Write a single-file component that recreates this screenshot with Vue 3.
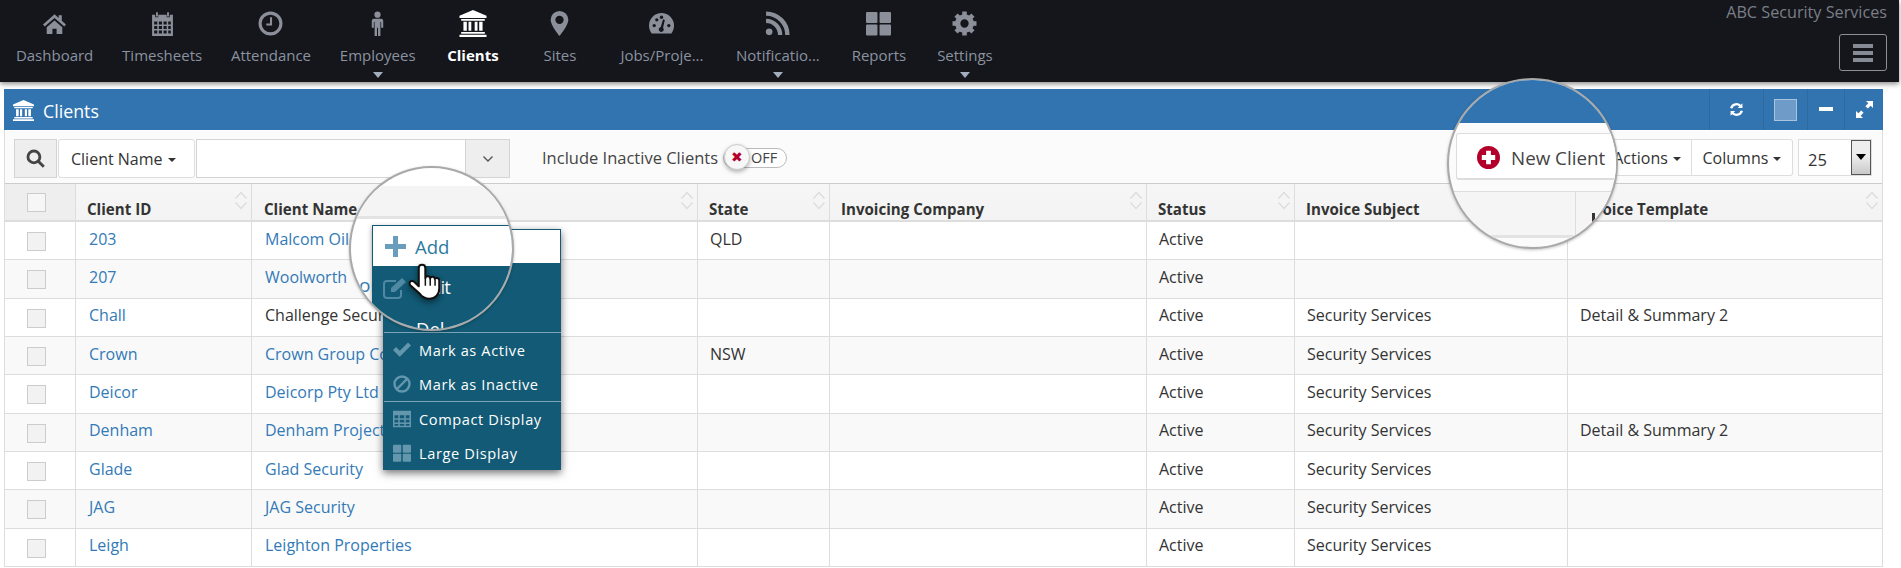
<script setup>
const navItems = [
  { icon: 'home', label: 'Dashboard', min: 86 },
  { icon: 'cal', label: 'Timesheets', min: 86 },
  { icon: 'clock', label: 'Attendance', min: 86 },
  { icon: 'male', label: 'Employees', caret: true, min: 86 },
  { icon: 'bank', label: 'Clients', active: true, min: 86 },
  { icon: 'marker', label: 'Sites', min: 88 },
  { icon: 'gauge', label: 'Jobs/Proje...', min: 116 },
  { icon: 'rss', label: 'Notificatio...', caret: true, min: 116 },
  { icon: 'tiles', label: 'Reports', min: 86 },
  { icon: 'cog', label: 'Settings', caret: true, min: 86 }
]
const heads = [
  { t: 'Client ID' }, { t: 'Client Name' }, { t: 'State' }, { t: 'Invoicing Company' },
  { t: 'Status' }, { t: 'Invoice Subject' }, { t: 'Invoice Template' }
]
const S = 'Security Services'
const D = 'Detail & Summary 2'
const rows = [
  ['203', 'Malcom Oil', 'QLD', '', '', ''],
  ['207', 'Woolworth', '', '', '', ''],
  ['Chall', 'Challenge Security', '', '', S, D, true],
  ['Crown', 'Crown Group Corporation', 'NSW', '', S, ''],
  ['Deicor', 'Deicorp Pty Ltd', '', '', S, ''],
  ['Denham', 'Denham Projects', '', '', S, D],
  ['Glade', 'Glad Security', '', '', S, ''],
  ['JAG', 'JAG Security', '', '', S, ''],
  ['Leigh', 'Leighton Properties', '', '', S, '']
]
const menuItems = [
  { icon: 'check', label: 'Mark as Active' },
  { icon: 'ban', label: 'Mark as Inactive', sep: true },
  { icon: 'table', label: 'Compact Display' },
  { icon: 'tiles', label: 'Large Display' }
]
const teeth = [0, 45, 90, 135, 180, 225, 270, 315]
</script>

<template>
  <div class="page">
    <svg class="sprite" width="0" height="0">
      <symbol id="home" viewBox="0 0 24 24"><path d="M12 3 1 13l1.6 1.8L12 6.6l9.4 8.2L23 13l-4-3.6V4h-3v2.8z"/><path d="M4.5 15.5 12 9l7.5 6.5V22H14v-5h-4v5H4.500z"/></symbol>
      <symbol id="cal" viewBox="0 0 24 24"><path fill-rule="evenodd" d="M2 3.500h3V6h3V3.500h8V6h3V3.500h3V24H2zM4 10v3h3v-3zm4.500 0v3h3v-3zm4.500 0v3h3v-3zm4.500 0v3H20v-3zM4 14.300v3h3v-3zm4.500 0v3h3v-3zm4.500 0v3h3v-3zm4.500 0v3H20v-3zM4 18.600v3h3v-3zm4.500 0v3h3v-3zm4.500 0v3h3v-3zm4.500 0v3H20v-3z"/><rect x="5.800" y="1" width="1.800" height="4.500" rx=".9"/><rect x="16.400" y="1" width="1.800" height="4.500" rx=".9"/></symbol>
      <symbol id="clock" viewBox="0 0 24 24"><circle cx="12" cy="12" r="10" fill="none" stroke="currentColor" stroke-width="3"/><path d="M13.500 6v8H8v-2h3.500V6z"/></symbol>
      <symbol id="male" viewBox="0 0 24 24"><circle cx="12" cy="3.500" r="3"/><path d="M8.500 7.500h7a2 2 0 0 1 2 2V16h-2v-5.500h-.7V24h-2.300v-8h-1v8H9.200V10.500h-.7V16h-2V9.500a2 2 0 0 1 2-2z"/></symbol>
      <symbol id="bank" viewBox="0 0 24 24"><path d="M12 0 24 5v2H0V5z"/><path d="M1.500 8h21v1.500h-21zM3.500 10.500h3v8h-3zM8 10.500h2.500v8H8zM13.500 10.500H16v8h-2.500zM17.500 10.500h3v8h-3zM1.500 19.500h21V21h-21zM0 22h24v2H0z"/></symbol>
      <symbol id="marker" viewBox="0 0 24 24"><path fill-rule="evenodd" d="M12 0a8.500 8.500 0 0 0-8.500 8.500C3.500 14 12 24 12 24s8.500-10 8.500-15.500A8.500 8.500 0 0 0 12 0zm0 4.500a4 4 0 1 1 0 8 4 4 0 0 1 0-8z"/></symbol>
      <symbol id="gauge" viewBox="0 0 24 24"><path d="M12 2A12 12 0 0 0 0 14c0 3 1 5.500 2.500 7.500h19C23 19.500 24 17 24 14A12 12 0 0 0 12 2z"/><g fill="#14161b"><circle cx="5" cy="14" r="1.600"/><circle cx="7.500" cy="8.500" r="1.600"/><circle cx="12" cy="6" r="1.600"/><circle cx="19" cy="14" r="1.600"/><path d="M13.500 8 15.200 8.600 13.500 16a2.400 2.400 0 1 1-2.200-.7z"/></g></symbol>
      <symbol id="rss" viewBox="0 0 24 24"><circle cx="4" cy="20" r="3.200"/><path d="M1 9.500A13.500 13.500 0 0 1 14.500 23M1 2.500A20.500 20.500 0 0 1 21.500 23" fill="none" stroke="currentColor" stroke-width="4.200"/></symbol>
      <symbol id="tiles" viewBox="0 0 24 24"><rect x="0" y="1" width="11" height="10.500" rx="1"/><rect x="13" y="1" width="11" height="10.500" rx="1"/><rect x="0" y="13" width="11" height="10.500" rx="1"/><rect x="13" y="13" width="11" height="10.500" rx="1"/></symbol>
      <symbol id="cog" viewBox="0 0 24 24"><circle cx="12" cy="12" r="6.500" fill="none" stroke="currentColor" stroke-width="5"/><rect v-for="a in teeth" :key="a" x="9.800" y="0.500" width="4.400" height="5" :transform="`rotate(${a} 12 12)`"/></symbol>
      <symbol id="check" viewBox="0 0 24 24"><path d="M9 21 0 12l4-4 5 5L20 2l4 4z"/></symbol>
      <symbol id="ban" viewBox="0 0 24 24"><circle cx="12" cy="12" r="10" fill="none" stroke="currentColor" stroke-width="3.200"/><path d="m5 19 14-14" stroke="currentColor" stroke-width="3.200"/></symbol>
      <symbol id="table" viewBox="0 0 24 24"><path fill-rule="evenodd" d="M0 1h24v22H0zM2 7v4h5V7zm7 0v4h6V7zm8 0v4h5V7zM2 13v3.500h5V13zm7 0v3.500h6V13zm8 0v3.500h5V13zM2 18.500V21h5v-2.500zm7 0V21h6v-2.500zm8 0V21h5v-2.500z"/></symbol>
    </svg>

    <header class="nav">
      <a v-for="n in navItems" :key="n.label" class="nav-item" :class="{ active: n.active }" :style="{ minWidth: n.min + 'px' }">
        <svg class="nav-icon"><use :href="'#' + n.icon"/></svg>
        <span class="nav-label">{{ n.label }}</span>
        <i v-if="n.caret" class="nav-caret"></i>
      </a>
      <div class="nav-right">
        <div class="company">ABC Security Services</div>
        <button class="burger"><i></i><i></i><i></i></button>
      </div>
    </header>

    <section class="panel">
      <div class="panel-head">
        <svg class="head-icon"><use href="#bank"/></svg>
        <span class="panel-title">Clients</span>
        <div class="tools">
          <span class="tool refresh">
            <svg width="15" height="15" viewBox="0 0 24 24" fill="none" stroke="#fff" stroke-width="3.800"><path d="M3.500 10A8.800 8.800 0 0 1 19 7"/><path d="M20.500 14A8.800 8.800 0 0 1 5 17"/><path d="M21.500 2v7.500H14z" fill="#fff" stroke="none"/><path d="M2.500 22v-7.500H10z" fill="#fff" stroke="none"/></svg>
          </span>
          <span class="tool swatch-cell"><i class="swatch"></i></span>
          <span class="tool min-cell"><i class="minus"></i></span>
          <span class="tool expand">
            <svg width="17" height="17" viewBox="0 0 17 17" fill="none"><path d="M10 0h7v7l-2.300-2.300-2.900 2.900-2.400-2.400 2.900-2.900zM7 17H0v-7l2.300 2.300 2.900-2.900 2.400 2.400-2.900 2.900z" fill="#fff"/></svg>
          </span>
        </div>
      </div>

      <div class="toolbar">
        <span class="addon search">
          <svg width="19" height="19" viewBox="0 0 24 24" fill="none" stroke="#444" stroke-width="3.600"><circle cx="10" cy="10" r="7.500"/><path d="m15.500 15.500 7 7"/></svg>
        </span>
        <button class="btn field-btn">Client Name <i class="caret"></i></button>
        <input class="field" type="text" />
        <span class="addon chevron">
          <svg width="12" height="8" viewBox="0 0 12 8" fill="none" stroke="#555" stroke-width="1.400"><path d="m1.500 1.500 4.500 4.500 4.500-4.500"/></svg>
        </span>
        <span class="inc-label">Include Inactive Clients</span>
        <span class="toggle"><span class="knob">✖</span><span class="off">OFF</span></span>
        <div class="tb-right">
          <div class="btn-group">
            <button class="btn">Actions <i class="caret"></i></button>
            <button class="btn">Columns <i class="caret"></i></button>
          </div>
          <div class="select"><span>25</span><i class="sel-arrow"></i></div>
        </div>
      </div>

      <div class="table">
        <div class="row head">
          <div class="cell cb-cell first"><i class="cb"></i></div>
          <div v-for="h in heads" :key="h.t" class="cell th">
            {{ h.t }}
            <svg class="sort" width="14" height="19" viewBox="0 0 14 19" fill="none" stroke="#dcdcdc" stroke-width="1.300"><path d="m1.500 7.500 5.500-6 5.500 6M1.500 11.500l5.500 6 5.500-6"/></svg>
          </div>
        </div>
        <div v-for="(r, i) in rows" :key="r[0]" class="row" :class="{ odd: i % 2 === 1 }">
          <div class="cell cb-cell"><i class="cb"></i></div>
          <div class="cell pad"><a>{{ r[0] }}</a></div>
          <div class="cell pad"><span v-if="r[6]">{{ r[1] }}</span><a v-else>{{ r[1] }}</a></div>
          <div class="cell">{{ r[2] }}</div>
          <div class="cell">{{ r[3] }}</div>
          <div class="cell">Active</div>
          <div class="cell">{{ r[4] }}</div>
          <div class="cell">{{ r[5] }}</div>
        </div>
      </div>
    </section>

    <!-- context menu floating over the table -->
    <div class="menu">
      <div class="menu-top"></div>
      <div class="menu-gap"></div>
      <div v-for="m in menuItems" :key="m.label" class="menu-item" :class="{ sep: m.sep }">
        <svg class="menu-icon"><use :href="'#' + m.icon"/></svg>
        <span>{{ m.label }}</span>
      </div>
    </div>

    <!-- magnifier over the menu -->
    <div class="lens lens-menu">
      <i class="lm-head"></i>
      <a class="lm-or">or</a>
      <div class="lm-menu">
        <div class="lm-add">
          <svg width="21" height="21" viewBox="0 0 21 21" fill="#6a9dbb"><path d="M8 0h5v8h8v5h-8v8H8v-8H0V8h8z"/></svg>
          <span>Add</span>
        </div>
        <div class="lm-dark">
          <svg class="lm-edit" width="26" height="22" viewBox="0 0 26 22" fill="none" stroke="#4f89a3" stroke-width="2"><path d="M18 13v5a3 3 0 0 1-3 3H4a3 3 0 0 1-3-3V7a3 3 0 0 1 3-3h9"/><path d="M8 15V11L19 1l4 4L12 15z" fill="#4f89a3" stroke="none"/></svg>
          <span class="lm-edit-t">Edit</span>
          <span class="lm-del">Del</span>
        </div>
      </div>
    </div>

    <!-- hand cursor -->
    <svg class="hand" width="41" height="41" viewBox="0 0 38 38">
      <path d="M14 2.500c2 0 3 1.300 3 3V15c0-1 1-1.800 2.300-1.800s2.200.8 2.200 2c.2-1 1.200-1.600 2.300-1.500 1.200.1 2 .9 2 2.100.4-.8 1.300-1.100 2.200-1 1.200.2 1.900 1.100 1.900 2.400v7.300c0 5.500-3.500 9.500-9 9.500-4.500 0-6.800-1.500-9-4.500L3 21.500c-1-1.300-.8-2.800.3-3.500 1.200-.8 2.600-.4 3.600.6l4 3.900V5.500c0-1.700 1-3 3.100-3z" fill="#fff" stroke="#111" stroke-width="1.900" stroke-linejoin="round"/>
      <path d="M17 15.500V22M21.500 15.500V22M26 16.500V22" stroke="#111" stroke-width="1.400" fill="none"/>
    </svg>

    <!-- magnifier over the New Client button -->
    <div class="lens lens-new">
      <i class="ln-blue"></i>
      <div class="ln-btn">
        <svg width="23" height="23" viewBox="0 0 24 24"><circle cx="12" cy="12" r="12" fill="#b3002a"/><path d="M9.500 5h5v4.500H19v5h-4.500V19h-5v-4.500H5v-5h4.500z" fill="#fff"/></svg>
        <span>New Client</span>
      </div>
      <div class="ln-head"><i class="ln-div"></i></div>
      <i class="ln-sliver"></i>
    </div>
  </div>
</template>

<style>
html, body { margin: 0; background: #fff; }
</style>

<style scoped>
.page {
  position: relative;
  width: 1901px;
  height: 568px;
  overflow: hidden;
  font-family: "Open Sans", "Liberation Sans", sans-serif;
  font-size: 16px;
  color: #333;
  background: #fff;
}
.sprite { position: absolute; }
i { display: block; font-style: normal; }

.nav {
  width: 1899px;
  height: 82px;
  background: #14161b;
  box-shadow: 0 2px 5px rgba(0, 0, 0, .45);
  display: flex;
  padding-left: 1.500px;
  box-sizing: border-box;
  position: relative;
}
.nav-item {
  display: flex;
  flex-direction: column;
  align-items: center;
  padding: 11px 14.400px 0;
  color: #8b92a0;
  box-sizing: border-box;
}
.nav-item.active { color: #fff; font-weight: 700; }
.nav-icon { width: 25px; height: 25px; fill: currentColor; color: #8b8f99; }
.active .nav-icon { color: #fff; width: 28px; height: 27px; margin-top: -1px; margin-bottom: -1px; }
.nav-label { font-size: 15px; line-height: 20px; margin-top: 9px; white-space: nowrap; }
.nav-caret {
  width: 0; height: 0; margin-top: 7px;
  border-left: 5px solid transparent;
  border-right: 5px solid transparent;
  border-top: 6px solid #a2adbd;
}
.nav-right {
  margin-left: auto;
  padding-right: 12px;
  display: flex;
  flex-direction: column;
  align-items: flex-end;
}
.company { font-size: 16.200px; line-height: 24px; color: #7b7e87; white-space: nowrap; }
.burger {
  margin-top: 10px;
  width: 48px; height: 37px;
  background: transparent;
  border: 1px solid #8d8f94;
  border-radius: 3px;
  padding: 0;
  display: flex;
  flex-direction: column;
  align-items: center;
  justify-content: center;
  gap: 3px;
}
.burger i { width: 20px; height: 4px; background: #868a94; }

.panel {
  margin: 7px 0 0 4px;
  width: 1879px;
  border-left: 1px solid #ddd;
  border-right: 1px solid #ddd;
  box-sizing: border-box;
}
.panel-head {
  height: 41px;
  margin: 0 -1px;
  background: #3174b0;
  display: flex;
  align-items: center;
  color: #fff;
  padding-left: 9px;
}
.head-icon { width: 21px; height: 21px; fill: #fff; margin-top: 2px; }
.panel-title { font-size: 17.800px; margin: 3px 0 0 9px; }
.tools { margin-left: auto; display: flex; height: 100%; }
.tool {
  display: flex;
  align-items: center;
  justify-content: center;
  border-left: 1px solid #2c6a9f;
  box-sizing: border-box;
}
.refresh { width: 54px; }
.swatch-cell { width: 44px; }
.min-cell { width: 37px; }
.expand { width: 39px; }
.swatch { width: 23px; height: 22px; background: #6f9bc9; border: 1px solid #a9c4df; box-sizing: border-box; }
.minus { width: 14px; height: 4px; background: #fff; margin-bottom: 2px; }

.toolbar {
  height: 54px;
  background: #fbfbfb;
  border-top: 1px solid #fff;
  border-bottom: 1px solid #ccc;
  box-sizing: border-box;
  display: flex;
  align-items: flex-start;
  padding: 8px 10px 0 9px;
}
.addon {
  height: 39px;
  background: #eee;
  border: 1px solid #d4d4d4;
  box-sizing: border-box;
  display: flex;
  align-items: center;
  justify-content: center;
}
.search { width: 43px; }
.chevron { width: 44px; border-left: 0; }
.btn {
  font: inherit;
  font-size: 16px;
  color: #333;
  height: 39px;
  background: #fff;
  border: 1px solid #ddd;
  padding: 0 12px;
  white-space: nowrap;
}
.field-btn { width: 137px; margin-left: 1px; border-radius: 3px; padding: 0 0 0 12px; text-align: left; }
.field {
  width: 270px;
  height: 39px;
  margin-left: 1px;
  border: 1px solid #d4d4d4;
  background: #fff;
  box-sizing: border-box;
  padding: 0;
}
.caret {
  display: inline-block;
  width: 0; height: 0;
  margin-left: 1px;
  vertical-align: middle;
  border-left: 4.500px solid transparent;
  border-right: 4.500px solid transparent;
  border-top: 4.500px solid #333;
}
.inc-label { margin-left: 32px; font-size: 16.500px; line-height: 38px; white-space: nowrap; color: #444; }
.toggle {
  position: relative;
  margin: 9px 0 0 5px;
  width: 64px;
  height: 20px;
  border: 1px solid #bbb;
  border-radius: 11px;
  background: #fff;
  box-sizing: border-box;
}
.knob {
  position: absolute;
  left: 0; top: -5px;
  width: 26px; height: 26px;
  border-radius: 50%;
  background: #f7f7f7;
  border: 1px solid #ccc;
  box-sizing: border-box;
  box-shadow: 0 2px 4px rgba(0, 0, 0, .3);
  color: #b3002a;
  font-size: 14px;
  line-height: 24px;
  text-align: center;
}
.off { position: absolute; left: 27px; top: -1px; font-size: 14.500px; line-height: 19px; color: #444; }
.tb-right { margin-left: auto; display: flex; }
.btn-group { display: flex; }
.btn-group .btn { height: 37px; }
.btn-group .btn:first-child { width: 140px; border-radius: 3px 0 0 3px; text-align: right; padding-right: 10px; }
.btn-group .btn:last-child { width: 101px; border-left: 0; border-radius: 0 3px 3px 0; padding: 0; }
.select {
  position: relative;
  margin-left: 5px;
  width: 74px;
  height: 37px;
  background: #fff;
  border: 1px solid #ddd;
  box-sizing: border-box;
  line-height: 40px;
  padding-left: 9px;
  font-size: 16.500px;
}
.sel-arrow {
  position: absolute;
  right: 0; top: 0;
  width: 20px; height: 35px;
  background: linear-gradient(#eee, #eee 45%, #c9c9c9);
  border: 1px solid #555;
  box-sizing: border-box;
}
.sel-arrow::after {
  content: "";
  position: absolute;
  left: 4px; top: 13px;
  border-left: 5px solid transparent;
  border-right: 5px solid transparent;
  border-top: 6px solid #000;
}

.row {
  display: grid;
  grid-template-columns: 70px 176px 446px 132px 317px 148px 273px 315px;
  height: 38.35px;
  box-sizing: border-box;
  border-bottom: 1px solid #ddd;
  background: #fff;
}
.row.odd { background: #f9f9f9; }
.row.head {
  height: 38px;
  background: linear-gradient(#f6f6f6, #f3f3f3);
  border-bottom: 2px solid #ddd;
}
.cell {
  border-left: 1px solid #ddd;
  padding: 6.500px 10px 0 12px;
  line-height: 21px;
  white-space: nowrap;
  overflow: hidden;
  position: relative;
}
.cell.pad { padding-left: 13px; }
.cell:first-child { border-left: 0; }
.th { font-weight: 700; font-size: 15.100px; padding: 14.500px 10px 0 11px; }
.th:nth-child(3) { padding-left: 12px; }
.first { background: #eee; }
.cb-cell { padding: 10px 0 0 22px; }
.first.cb-cell { padding-top: 9px; }
.cb {
  width: 19px; height: 19px;
  background: #f2f2f2;
  border: 1px solid #ccc;
  box-sizing: border-box;
}
.first .cb { background: #f6f6f6; }
.sort { position: absolute; right: 3px; top: 7px; }
a { color: #337ab7; text-decoration: none; }

/* context menu */
.menu {
  position: absolute;
  left: 383px; top: 229px;
  width: 178px;
  height: 241px;
  background: #125a75;
  box-shadow: 0 3px 8px rgba(0, 0, 0, .55);
  color: #fff;
  box-sizing: border-box;
}
.menu-top { height: 35px; background: #fff; border: 1px solid #125a75; border-left: 0; box-sizing: border-box; }
.menu-gap { height: 68px; border-bottom: 1px solid #7ca3b5; margin-left: 1px; }
.menu-item {
  height: 34px;
  display: flex;
  align-items: center;
  padding-left: 10px;
  font-size: 14.600px;
  letter-spacing: .6px;
}
.menu-item.sep { border-bottom: 1px solid #7ca3b5; margin-left: 1px; padding-left: 9px; }
.menu-icon { width: 18px; height: 18px; fill: #6496ad; color: #6496ad; margin-right: 8px; flex: none; }

/* lens */
.lens {
  position: absolute;
  border-radius: 50%;
  border: 2px solid #a9a9a9;
  box-sizing: border-box;
  overflow: hidden;
  background: #fff;
  box-shadow: 0 1px 3px rgba(0, 0, 0, .25);
}
.lens-menu { left: 349px; top: 166px; width: 165px; height: 165px; }
.lens-menu > * { position: absolute; }
.lm-head { left: 0; top: 18px; width: 100%; height: 30px; background: #f4f4f4; border-bottom: 3px solid #e3e3e3; }
.lm-or { left: 8px; top: 104px; font-size: 19px; color: #337ab7; }
.lm-menu {
  left: 21px; top: 57px;
  width: 160px;
  height: 110px;
  box-shadow: 0 2px 5px rgba(0, 0, 0, .4);
  background: #125a75;
}
.lm-add {
  height: 42px;
  background: #fff;
  border: 1px solid #125a75;
  border-right: 0;
  box-sizing: border-box;
  display: flex;
  align-items: center;
  padding-left: 12px;
  gap: 9px;
  color: #2b7ba0;
  font-size: 18.500px;
}
.lm-dark { position: relative; height: 68px; color: #fff; font-size: 18.500px; }
.lm-dark > * { position: absolute; }
.lm-edit { left: 11px; top: 10px; }
.lm-edit-t { left: 49px; top: 7px; letter-spacing: -1px; }
.lm-del { left: 44px; top: 49px; }
.hand {
  position: absolute;
  left: 407px; top: 262px;
  filter: drop-shadow(0 3px 3px rgba(0, 0, 0, .45));
}

.lens-new { left: 1447px; top: 78px; width: 171px; height: 171px; background: #fbfbfb; }
.lens-new > * { position: absolute; }
.ln-blue { left: 0; top: 0; width: 100%; height: 43px; background: #3174b0; }
.ln-btn {
  left: 7px; top: 53px;
  width: 190px; height: 47px;
  background: #fff;
  border: 1px solid #ddd;
  border-bottom-width: 2px;
  border-radius: 3px;
  box-sizing: border-box;
  display: flex;
  align-items: center;
  padding: 3px 0 0 20px;
  gap: 11px;
  font-size: 18.800px;
  color: #444;
}
.ln-head {
  left: 0; top: 111px;
  width: 100%; height: 47px;
  background: #f5f5f5;
  border-top: 1px solid #ddd;
  border-bottom: 3px solid #e3e3e3;
  box-sizing: border-box;
}
.ln-div { position: absolute; left: 126px; top: 0; width: 1px; height: 100%; background: #ddd; }
.ln-sliver { left: 143px; top: 133px; width: 3px; height: 11px; background: #3a3230; }
</style>
